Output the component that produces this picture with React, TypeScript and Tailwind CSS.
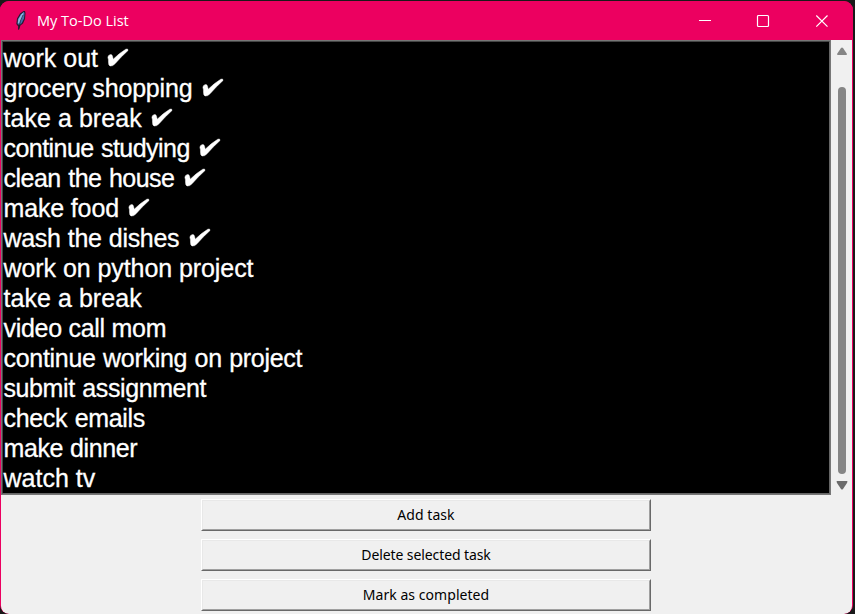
const tasks = [
  { label: 'work out', done: true, spacing: 'tracking-[0px]' },
  { label: 'grocery shopping', done: true, spacing: 'tracking-[-0.18px]' },
  { label: 'take a break', done: true, spacing: 'tracking-[0.05px]' },
  { label: 'continue studying', done: true, spacing: 'tracking-[-0.55px] [word-spacing:1px]' },
  { label: 'clean the house', done: true, spacing: 'tracking-[-0.5px] [word-spacing:1px]' },
  { label: 'make food', done: true, spacing: 'tracking-[-0.15px]' },
  { label: 'wash the dishes', done: true, spacing: 'tracking-[-0.3px] [word-spacing:0.5px]' },
  { label: 'work on python project', done: false, spacing: 'tracking-[-0.07px]' },
  { label: 'take a break', done: false, spacing: 'tracking-[0.05px]' },
  { label: 'video call mom', done: false, spacing: 'tracking-[-0.29px]' },
  { label: 'continue working on project', done: false, spacing: 'tracking-[-0.3px] [word-spacing:0.8px]' },
  { label: 'submit assignment', done: false, spacing: 'tracking-[-0.4px] [word-spacing:1px]' },
  { label: 'check emails', done: false, spacing: 'tracking-[-0.35px] [word-spacing:1px]' },
  { label: 'make dinner', done: false, spacing: 'tracking-[-0.4px] [word-spacing:0.5px]' },
  { label: 'watch tv', done: false, spacing: 'tracking-[0px]' },
];

function Feather() {
  return (
    <svg width="14" height="21" viewBox="0 0 14 21">
      <path d="M9.5 1H11L11.5 3L11 9L9 13.5L6.5 15.5L5 19.5L4 19.5L4.2 16.5L2.3 14L3 8.5L6 3.5Z" fill="#2b1830" />
      <path d="M10 1.8L10.5 3.5L10 8.5L7.8 13L5.5 15L3.5 14L4 9L6.8 4.5Z" fill="#426fae" />
      <path d="M9.6 2.2L8.5 7L5.2 13.5L3.8 13L4.5 9L7.2 4.5Z" fill="#8db7e2" />
      <path d="M9 5L6.4 11L4.6 19.5" stroke="#1c1a2b" strokeWidth="0.7" fill="none" />
    </svg>
  );
}

function TitleBar() {
  return (
    <header className="flex h-[39px] shrink-0 items-center bg-[#ec0060] pl-[14px] text-white">
      <Feather />
      <h1 className="ml-[9px] flex-1 font-['Open_Sans','Noto_Sans',sans-serif] text-[14.5px] leading-5">My To-Do List</h1>
      <svg className="mr-[23px]" width="132" height="14" viewBox="0 0 132 14" fill="none" stroke="white">
        <path d="M1 6.5H13" />
        <rect x="59.5" y="1.5" width="11" height="11" rx="1" strokeWidth="1.2" />
        <path d="M118.3 1.5L129.5 12.7M129.5 1.5L118.3 12.7" strokeWidth="1.2" />
      </svg>
    </header>
  );
}

function Check() {
  return (
    <svg className="ml-[9.5px] shrink-0" width="22" height="20" viewBox="0 0 22 20">
      <path d="M0.9 9.3Q1.1 7.2 3 6.7Q5 6 5.5 8.2L6.2 11.2Q12.5 5 18.8 1.2Q21.3 0.3 21 2.5Q13.8 9 8 15.8Q5.5 18.4 3 18Q1.5 17.4 1.5 14.5Q1.7 11.6 0.9 9.3Z" fill="white" stroke="white" strokeWidth="0.5" />
    </svg>
  );
}

function TaskButton({ label, spacing }: { label: string; spacing: string }) {
  return (
    <button className="h-8 w-[450px] border border-t-white border-r-[#696969] border-b-[#696969] border-l-white bg-[#f0f0f0] font-['Noto_Sans','Open_Sans',sans-serif] text-[14px] leading-[26px] text-black">
      <span className={`block h-full border border-t-[#e8e8e8] border-r-[#a0a0a0] border-b-[#a0a0a0] border-l-[#e8e8e8] leading-[28px] ${spacing}`}>{label}</span>
    </button>
  );
}

export default function App() {
  return (
    <div className="h-[614px] w-[855px] overflow-hidden bg-[#191919] pt-px">
      <main className="flex h-[613px] w-[853px] flex-col overflow-hidden rounded-[9px] bg-[#ec0060]">
        <TitleBar />
        <section className="mx-px flex flex-1 flex-col overflow-hidden rounded-b-[8px] bg-[#f0f0f0]">
          <div className="flex h-[455px]">
            <div className="w-[830px] border border-[#777] bg-black">
              <ul className="h-full border border-[#444] border-b-[#666] border-r-[#666] pl-[0.5px] pt-[0.5px] font-['Liberation_Sans',Arial,sans-serif] text-[25px] leading-[30px] text-white [-webkit-text-stroke:0.3px_white]">
                {tasks.map((task, index) => (
                  <li key={index} className="flex h-[30px] items-center whitespace-nowrap">
                    <span className={task.spacing}>{task.label}</span>
                    {task.done && <Check />}
                  </li>
                ))}
              </ul>
            </div>
            <div className="flex flex-1 flex-col items-center pt-[7px]">
              <svg width="12" height="9" viewBox="0 0 12 9"><path d="M5 1Q6 0 7 1L11 7Q11 8 10 8H2Q1 8 1 7Z" fill="#858585" /></svg>
              <div className="mt-[31px] h-[387px] w-[8px] rounded-full bg-[#858585]" />
              <svg className="mt-[6px]" width="12" height="10" viewBox="0 0 12 10"><path d="M1 1H11Q12 1 11 3L7 9Q6 10 5 9L1 3Q0 1 1 1Z" fill="#6b6b6b" /></svg>
            </div>
          </div>
          <div className="flex flex-col gap-2 pl-[200px] pt-1">
            <TaskButton label="Add task" spacing="tracking-[0.05px]" />
            <TaskButton label="Delete selected task" spacing="tracking-[-0.1px]" />
            <TaskButton label="Mark as completed" spacing="tracking-[0.05px]" />
          </div>
        </section>
      </main>
    </div>
  );
}
